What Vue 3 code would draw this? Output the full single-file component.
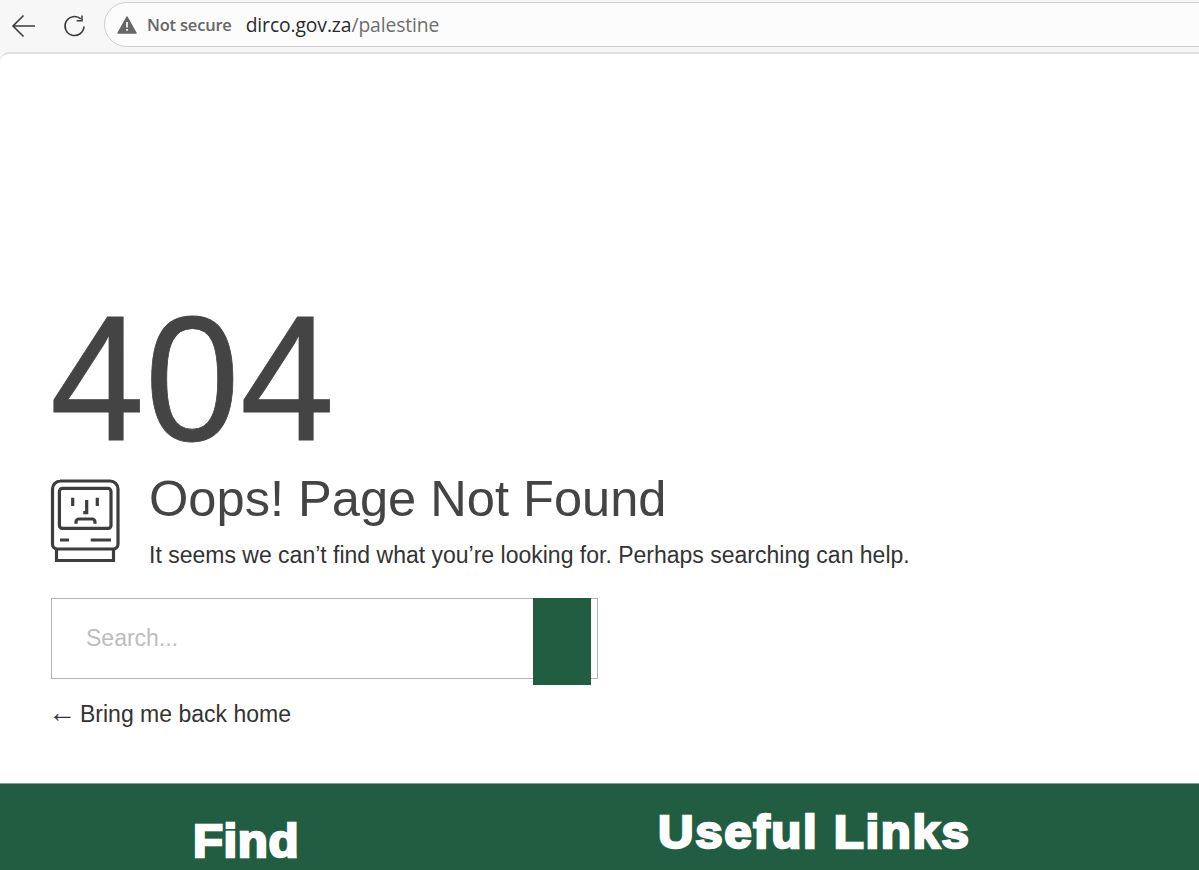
<script setup>
const host = 'dirco.gov.za'
const path = '/palestine'
</script>

<template>
  <div class="screen">
    <header class="toolbar">
      <svg class="back" width="26" height="24" viewBox="0 0 26 24" fill="none" stroke="#3c3c3c" stroke-width="1.6">
        <path d="M24 12H2M12.5 1.5L2 12l10.500 10.500" />
      </svg>
      <svg class="reload" width="24" height="24" viewBox="0 0 24 24" fill="none" stroke="#3c3c3c" stroke-width="1.6">
        <path d="M21 12.500a9.500 9.500 0 1 1-3.200-7.600" />
        <path d="M19 1.500v5.300h-5.300" stroke-width="1.500" />
      </svg>
      <div class="omnibox">
        <svg class="warn" width="20" height="18" viewBox="0 0 20 18">
          <path d="M10 1L19 17H1z" fill="#666" stroke="#666" stroke-width="1.500" stroke-linejoin="round" />
          <path d="M10 6v5.500M10 13v1.800" stroke="#fcfcfc" stroke-width="1.700" />
        </svg>
        <span class="secure">Not secure</span>
        <span class="url"><span class="host">{{ host }}</span><span class="path">{{ path }}</span></span>
      </div>
    </header>

    <main class="page">
      <section class="content">
        <h1 class="code">404</h1>
        <div class="message">
          <svg class="mac" width="70" height="86" viewBox="0 0 70 86" fill="none" stroke="#3d3d3d" stroke-width="3.2">
            <path d="M10 3h50a8 8 0 0 1 8 8v55a5 5 0 0 1-5 5H7.500a5 5 0 0 1-5-5V11a8 8 0 0 1 8-8z" />
            <path d="M6.500 71v11.500h57V71" />
            <rect x="9.400" y="10.400" width="51.600" height="40" rx="3" />
            <path d="M22.700 19.700V28M47.300 19.700V28M36.700 22v12.700h-3.400M26 45.700v-1.700a3 3 0 0 1 3-3h13a3 3 0 0 1 3 3v1.700" />
            <path d="M10 62h9M40.700 62H61" />
          </svg>
          <div class="copy">
            <h2>Oops! Page Not Found</h2>
            <p>It seems we can’t find what you’re looking for. Perhaps searching can help.</p>
          </div>
        </div>
        <form class="search" @submit.prevent>
          <input type="text" placeholder="Search..." />
          <button type="submit" aria-label="Search"></button>
        </form>
        <a class="home" href="#"><span class="arrow">←</span><span>Bring me back home</span></a>
      </section>
    </main>

    <footer class="footer">
      <h3 class="find">Find</h3>
      <h3 class="links">Useful Links</h3>
    </footer>
  </div>
</template>

<style>
html, body { margin: 0; background: #fff; overflow: hidden; }
</style>

<style scoped>
.screen {
  width: 1199px;
  height: 870px;
  display: flex;
  flex-direction: column;
  overflow: hidden;
  background: #f7f7f7;
  font-family: "Liberation Sans", Arial, sans-serif;
}
.toolbar {
  height: 52px;
  flex: none;
  box-sizing: border-box;
  padding: 2px 0 5px 10px;
  display: flex;
  align-items: center;
  background: #f7f7f7;
}
.back { flex: none; margin-top: 3px; margin-left: 1px; }
.reload { flex: none; margin: 2px 0 0 26px; }
.omnibox {
  flex: 1;
  height: 45px;
  margin-left: 17px;
  margin-right: -40px;
  box-sizing: border-box;
  border: 1.500px solid #cfcfcf;
  border-radius: 23px;
  background: #fcfcfc;
  display: flex;
  align-items: center;
  padding-left: 12px;
}
.warn { flex: none; }
.secure {
  margin-left: 10px;
  font: 600 16.500px "Open Sans", sans-serif;
  color: #666;
  letter-spacing: -0.2px;
}
.url {
  margin-left: 14px;
  font: 19.300px "Open Sans", sans-serif;
  letter-spacing: -0.1px;
}
.host { color: #2a2a2a; }
.path { color: #6e6e6e; }
.page {
  flex: 1;
  background: #fff;
  border-top: 2px solid #dedede;
  border-radius: 9px 0 0 0;
  box-sizing: border-box;
  padding: 0 0 0 51px;
  min-height: 0;
}
.content {
  display: flex;
  flex-direction: column;
  align-items: flex-start;
  padding-top: 230px;
}
.code {
  margin: 0 0 0 -1px;
  font-size: 178px;
  font-weight: 400;
  line-height: 190px;
  letter-spacing: 0.500px;
  color: #444;
  transform: scaleX(0.955);
  transform-origin: left center;
  -webkit-text-stroke: 0.800px #444;
}
.message {
  display: flex;
  align-items: flex-start;
  gap: 28px;
  margin-top: 3px;
}
.mac { flex: none; margin: 1px 0 0 -1px; }
.copy { padding-left: 1px; }
.copy h2 {
  margin: -6px 0 0;
  font-size: 50.600px;
  font-weight: 400;
  line-height: 56px;
  color: #444;
}
.copy p {
  margin: 14px 0 0;
  font-size: 23px;
  line-height: 28px;
  color: #333;
}
.search {
  width: 547px;
  height: 81px;
  box-sizing: border-box;
  margin-top: 29px;
  border: 1px solid #b4b4b4;
  display: flex;
  justify-content: space-between;
  align-items: flex-start;
  padding: 0 6px 0 0;
}
.search input {
  flex: 1;
  min-width: 0;
  height: 79px;
  box-sizing: border-box;
  border: 0;
  outline: 0;
  padding: 0 0 0 34px;
  background: transparent;
  font: 23px "Liberation Sans", Arial, sans-serif;
}
.search input::placeholder { color: #bdbdbd; opacity: 1; }
.search button {
  flex: none;
  width: 58px;
  height: 87px;
  margin-top: -1px;
  border: 0;
  padding: 0;
  background: #215e41;
}
.home {
  margin-top: 21px;
  font-size: 23px;
  line-height: 28px;
  color: #333;
  text-decoration: none;
}
.arrow {
  font-size: 28px;
  line-height: 0;
  margin: 0 4px 0 -3px;
}
.footer {
  height: 87px;
  flex: none;
  background: #215e41;
  border-top: 1px solid #7f9f90;
  box-sizing: border-box;
  display: flex;
  align-items: flex-start;
  color: #fff;
}
.footer h3 {
  margin: 0;
  font-size: 46px;
  font-weight: 700;
  line-height: 52px;
  -webkit-text-stroke: 2.400px #fff;
  transform: scaleX(1.07);
  transform-origin: left center;
}
.find { margin: 31px 0 0 193px !important; letter-spacing: 0.500px; }
.links { margin: 22px 0 0 366px !important; letter-spacing: 1.550px; }
</style>
